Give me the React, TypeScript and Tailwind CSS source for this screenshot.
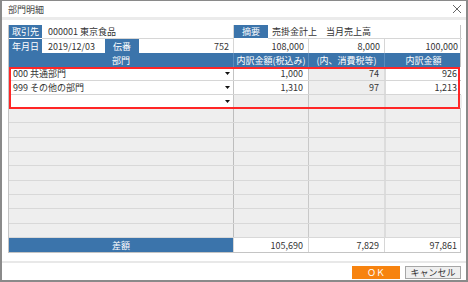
import React from "react";

const font = "font-['Noto_Sans_CJK_JP','Noto_Sans',sans-serif]";

function Label({ children, w }: { children: React.ReactNode; w: string }) {
  return (
    <div className={`${w} flex h-full items-center justify-center bg-[#3b74ab] text-white`}>
      {children}
    </div>
  );
}

function Arrow() {
  return (
    <svg width="5" height="3" viewBox="0 0 5 3" className="mr-[3px]">
      <polygon points="0,0 5,0 2.5,3" fill="#111" />
    </svg>
  );
}

const rows = [
  { name: "000 共通部門", a: "1,000", b: "74", c: "926" },
  { name: "999 その他の部門", a: "1,310", b: "97", c: "1,213" },
  { name: "", a: "", b: "", c: "" },
];

export default function App() {
  return (
    <div
      className={`${font} flex h-[282px] w-[468px] flex-col border-2 border-t border-[#8a8a8a] bg-white text-[9px] leading-none text-[#333]`}
    >
      {/* title */}
      <div className="flex h-[16px] items-center justify-between pl-[6px] pr-[4px] text-[#444]">
        <span>部門明細</span>
        <svg width="10" height="10" viewBox="0 0 10 10">
          <path d="M1 1L9 9M9 1L1 9" stroke="#666" strokeWidth="1" />
        </svg>
      </div>
      <div className="h-[3px] bg-[#ebebeb]" />

      <div className="px-[6px] pt-[5px] pr-[5px]">
        <div className="flex w-[453px] flex-col border-x border-[#c4c4c4]">
          {/* row 1 */}
          <div className="grid h-[14px] grid-cols-[224px_229px]">
            <div className="flex items-stretch">
              <div className="border-b border-white">
                <Label w="w-[33px]">取引先</Label>
              </div>
              <span className="flex flex-1 items-center border-b border-[#d6d6d6] pl-[6px]">000001 東京食品</span>
            </div>
            <div className="flex items-stretch border-l border-[#d6d6d6]">
              <div className="border-b border-white">
                <Label w="w-[34px]">摘要</Label>
              </div>
              <span className="flex flex-1 items-center border-b border-[#d6d6d6] pl-[4px]">売掛金計上　当月売上高</span>
            </div>
          </div>
          {/* row 2 */}
          <div className="grid h-[14px] grid-cols-[224px_75px_76px_78px]">
            <div className="flex items-center">
              <Label w="w-[33px]">年月日</Label>
              <span className="w-[63px] pl-[6px]">2019/12/03</span>
              <Label w="w-[34px]">伝番</Label>
              <span className="flex-1 pr-[4px] text-right">752</span>
            </div>
            <div className="flex items-center justify-end border-l border-[#d6d6d6] pr-[4px]">108,000</div>
            <div className="flex items-center justify-end border-l border-[#d6d6d6] pr-[4px]">8,000</div>
            <div className="flex items-center justify-end border-l border-[#d6d6d6] pr-[4px]">100,000</div>
          </div>
          {/* header */}
          <div className="grid h-[14px] grid-cols-[224px_75px_76px_78px] bg-[#3b74ab] text-white">
            <div className="flex items-center justify-center">部門</div>
            <div className="flex items-center justify-center border-l border-[#5a8cbd]">内訳金額(税込み)</div>
            <div className="flex items-center justify-center border-l border-[#5a8cbd]">(内、消費税等)</div>
            <div className="flex items-center justify-center border-l border-[#5a8cbd]">内訳金額</div>
          </div>
          {/* data rows */}
          <div className="relative">
            {rows.map((r, i) => (
              <div
                key={i}
                className="grid h-[14px] grid-cols-[224px_75px_76px_78px] border-b border-[#d6d6d6]"
              >
                <div className="flex items-center justify-between bg-white pl-[4px]">
                  <span>{r.name}</span>
                  <Arrow />
                </div>
                <div className={`flex items-center justify-end border-l border-[#c4c4c4] pr-[5px] ${r.a ? "bg-white" : "bg-[#eeeeee]"}`}>
                  {r.a}
                </div>
                <div className="flex items-center justify-end border-l border-[#c4c4c4] bg-[#eeeeee] pr-[5px]">
                  {r.b}
                </div>
                <div className={`flex items-center justify-end border-l-2 border-[#dcdcdc] pr-[5px] ${r.c ? "bg-white" : "bg-[#eeeeee]"}`}>
                  {r.c}
                </div>
              </div>
            ))}
            <div className="pointer-events-none absolute inset-0 border-2 border-[#ff2626]" />
          </div>
          {/* empty rows */}
          <div className="flex h-[129px] flex-col bg-[#eeeeee]">
            {Array.from({ length: 9 }).map((_, i) => (
              <div
                key={i}
                className="grid flex-1 grid-cols-[224px_75px_76px_78px] border-b border-[#d8d8d8]"
              >
                <div />
                <div className="border-l border-[#bdbdbd]" />
                <div className="border-l border-[#c8c8c8]" />
                <div className="border-l-2 border-[#dcdcdc]" />
              </div>
            ))}
          </div>
          {/* footer */}
          <div className="grid h-[15px] grid-cols-[224px_75px_76px_78px] border-b border-[#c4c4c4]">
            <div className="flex items-center justify-center bg-[#3b74ab] text-white">差額</div>
            <div className="flex items-center justify-end border-l border-[#d6d6d6] pr-[5px]">105,690</div>
            <div className="flex items-center justify-end border-l border-[#d6d6d6] pr-[5px]">7,829</div>
            <div className="flex items-center justify-end border-l border-[#d6d6d6] pr-[5px]">97,861</div>
          </div>
        </div>
      </div>

      <div className="mt-[8px] h-[2px] bg-[#e8e8e8]" />
      <div className="flex justify-end gap-[5px] pr-[5px] pt-[3px]">
        <button className="flex h-[13px] w-[48px] items-center justify-center bg-[#f7830f] text-white">
          ＯＫ
        </button>
        <button className="flex h-[13px] w-[56px] items-center justify-center border border-[#a6a6a6] bg-[#efefef] text-[#333]">
          キャンセル
        </button>
      </div>
    </div>
  );
}
